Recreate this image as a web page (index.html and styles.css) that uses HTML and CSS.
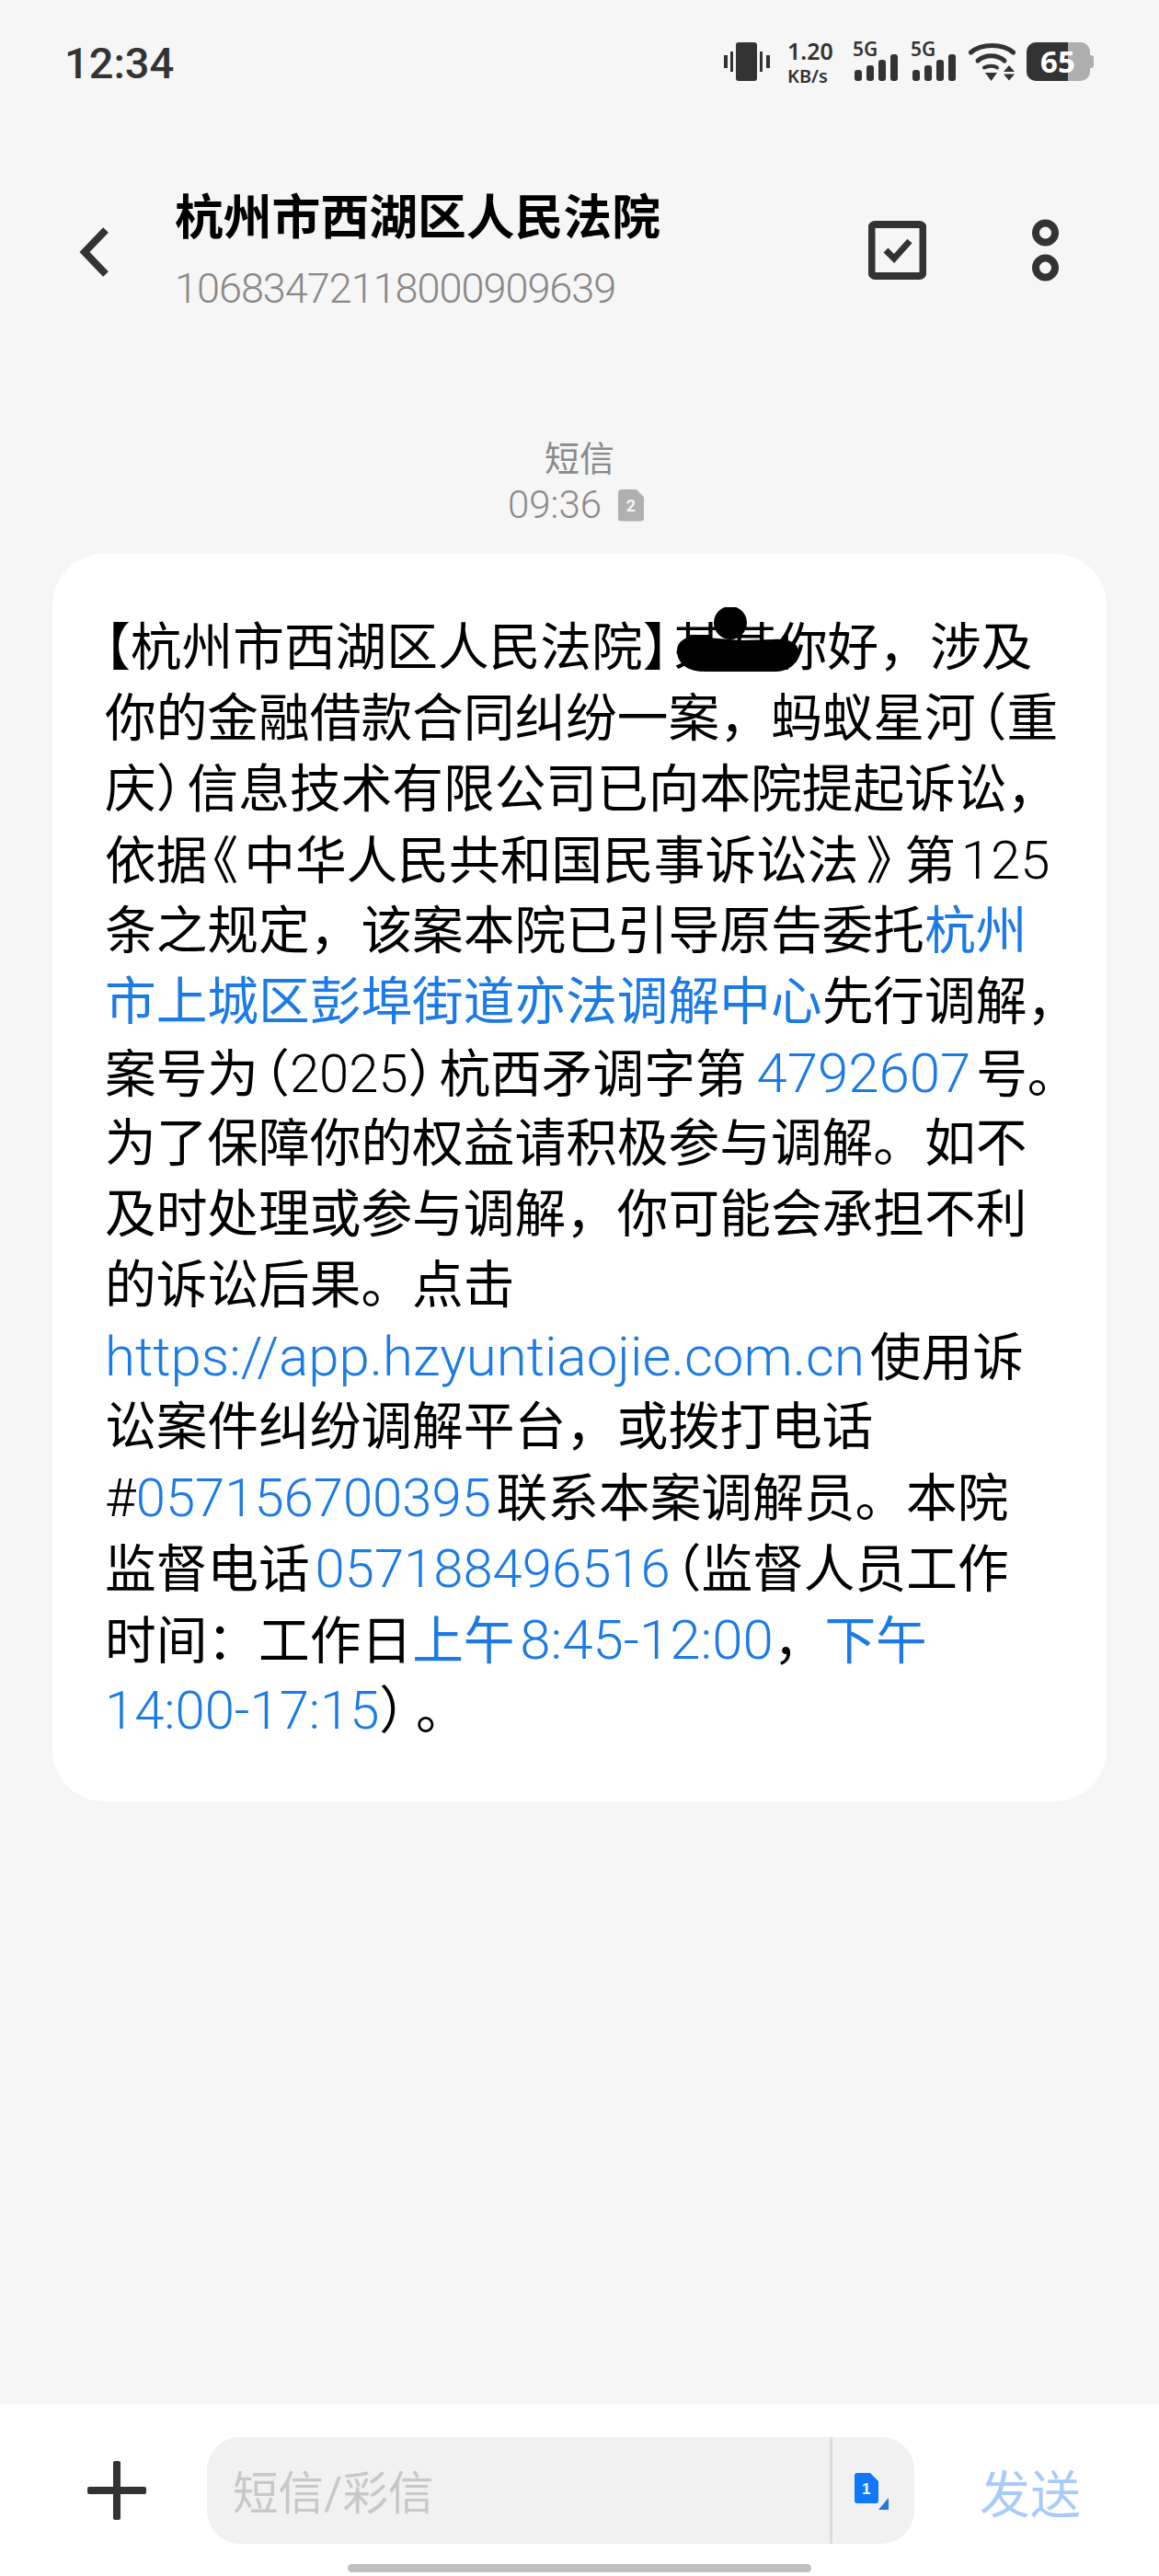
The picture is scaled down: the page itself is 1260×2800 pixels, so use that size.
FILE: index.html
```html
<!DOCTYPE html>
<html>
<head>
    <title>短信</title>
    <link rel="stylesheet" href="styles.css">
</head>
<body>
    <div class="phone">
        <div class="status-bar">
            <span class="clock">12:34</span>
            <div class="status-icons">
                <svg class="icon-vibrate" width="50" height="42" viewBox="0 0 50 42">
                    <rect x="13" y="0" width="23" height="42" rx="3" fill="#333"/>
                    <rect x="7" y="10" width="3" height="22" fill="#333"/>
                    <rect x="0" y="14" width="4" height="14" fill="#333"/>
                    <rect x="39" y="10" width="3" height="22" fill="#333"/>
                    <rect x="46" y="14" width="4" height="14" fill="#333"/>
                </svg>
                <div class="net-speed">1.20<br><span class="speed-unit">KB/s</span></div>
                <div class="signal">
                    <span class="signal-label">5G</span>
                    <svg width="47" height="29" viewBox="0 0 47 29">
                        <rect x="0" y="17" width="8" height="12" rx="3" fill="#333"/>
                        <rect x="13" y="12" width="8" height="17" rx="3" fill="#333"/>
                        <rect x="26" y="6" width="8" height="23" rx="3" fill="#333"/>
                        <rect x="39" y="0" width="8" height="29" rx="3" fill="#333"/>
                    </svg>
                </div>
                <div class="signal">
                    <span class="signal-label">5G</span>
                    <svg width="47" height="29" viewBox="0 0 47 29">
                        <rect x="0" y="17" width="8" height="12" rx="3" fill="#333"/>
                        <rect x="13" y="12" width="8" height="17" rx="3" fill="#333"/>
                        <rect x="26" y="6" width="8" height="23" rx="3" fill="#333"/>
                        <rect x="39" y="0" width="8" height="29" rx="3" fill="#333"/>
                    </svg>
                </div>
                <svg class="icon-wifi" width="51" height="42" viewBox="0 0 51 42">
                    <path d="M2.5 11 C14 1 37 1 48.5 11" fill="none" stroke="#333" stroke-width="5" stroke-linecap="round"/>
                    <path d="M10 20 C18 13 31 13 39 20" fill="none" stroke="#333" stroke-width="5" stroke-linecap="round"/>
                    <path d="M17 27.5 C21 25 28 25 31 27.5" fill="none" stroke="#333" stroke-width="4" stroke-linecap="round"/>
                    <path d="M18 33 H31 L24.5 42 Z" fill="#333"/>
                    <path d="M44 25 L50 32 H38 Z M38 34.5 H50 L44 41.5 Z" fill="#333"/>
                </svg>
                <div class="battery">
                    <div class="battery-body">65</div>
                    <span class="battery-cap"></span>
                </div>
            </div>
        </div>

        <header class="top-bar">
            <svg class="back" width="32" height="54" viewBox="0 0 32 54">
                <path d="M29 3 L6 27 L29 51" fill="none" stroke="#333" stroke-width="8"/>
            </svg>
            <div class="contact">
                <h1 class="contact-name">杭州市西湖区人民法院</h1>
                <div class="contact-number">10683472118000909639</div>
            </div>
            <svg class="icon-select" width="63" height="64" viewBox="0 0 63 64">
                <rect x="3.5" y="4" width="56" height="56" rx="4" fill="none" stroke="#333" stroke-width="8"/>
                <path d="M19 32 L28 41 L45 22" fill="none" stroke="#333" stroke-width="7"/>
            </svg>
            <svg class="icon-more" width="29" height="68" viewBox="0 0 29 68">
                <circle cx="14.5" cy="15" r="10.5" fill="none" stroke="#333" stroke-width="8"/>
                <circle cx="14.5" cy="53" r="10.5" fill="none" stroke="#333" stroke-width="8"/>
            </svg>
        </header>

        <main class="thread">
            <div class="msg-meta">
                <div class="msg-type">短信</div>
                <div class="msg-time"><span>09:36</span><span class="sim-badge">2</span></div>
            </div>
            <section class="bubble">
                <div class="line"><span class="halt">【</span>杭州市西湖区人民法院<span class="halt close">】</span>某某你好，涉及<svg class="redact" width="132" height="75" viewBox="0 0 132 75">
                    <circle cx="58" cy="17" r="18" fill="#000"/>
                    <path d="M0 47 C0 38 8 32 20 32 L70 36 L105 35 C120 34 132 38 132 48 C132 62 122 70 105 70 L30 70 C10 70 0 60 0 47 Z" fill="#000"/>
                </svg></div>
                <div class="line">你的金融借款合同纠纷一案，蚂蚁星河<span class="halt open">（</span>重</div>
                <div class="line">庆<span class="halt close">）</span>信息技术有限公司已向本院提起诉讼，</div>
                <div class="line">依据<span class="halt book-open">《</span>中华人民共和国民事诉讼法<span class="halt book-close">》</span>第 <span class="lat">125</span></div>
                <div class="line">条之规定，该案本院已引导原告委托<a>杭州</a></div>
                <div class="line"><a>市上城区彭埠街道亦法调解中心</a>先行调解，</div>
                <div class="line">案号为<span class="halt open">（</span><span class="lat">2025</span><span class="halt close">）</span>杭西矛调字第 <a class="lat wide case-no">4792607</a> 号。</div>
                <div class="line">为了保障你的权益请积极参与调解。如不</div>
                <div class="line">及时处理或参与调解，你可能会承担不利</div>
                <div class="line">的诉讼后果。点击</div>
                <div class="line"><a class="lat wide">https://app.hzyuntiaojie.com.cn</a> 使用诉</div>
                <div class="line">讼案件纠纷调解平台，或拨打电话</div>
                <div class="line"><span class="lat">#</span><a class="lat">057156700395</a> 联系本案调解员。本院</div>
                <div class="line">监督电话 <a class="lat">057188496516</a><span class="halt open">（</span>监督人员工作</div>
                <div class="line">时间：工作日<a>上午 <span class="lat wide">8:45-12:00</span></a>，<a>下午</a></div>
                <div class="line"><a class="lat">14:00-17:15</a><span class="halt close">）</span> 。</div>
            </section>
        </main>

        <footer class="composer">
            <svg class="icon-plus" width="64" height="64" viewBox="0 0 64 64">
                <rect x="0" y="28" width="64" height="8" rx="2" fill="#333"/>
                <rect x="28" y="0" width="8" height="64" rx="2" fill="#333"/>
            </svg>
            <div class="input-box">
                <span class="placeholder">短信/彩信</span>
                <div class="sim-switch">
                    <svg width="37" height="40" viewBox="0 0 37 40">
                        <path d="M3 0 H17 L26 9 V30 Q26 33 23 33 H3 Q0 33 0 30 V3 Q0 0 3 0 Z" fill="#0f78fa"/>
                        <path d="M37 27 V40 H26 Z" fill="#2a77d8"/>
                        <text x="8" y="23" class="sim-num">1</text>
                    </svg>
                </div>
            </div>
            <span class="send">发送</span>
        </footer>
        <div class="home-bar"></div>
    </div>
</body>
</html>
```

FILE: styles.css
```css
* {
    box-sizing: border-box;
}

body {
    margin: 0;
    padding: 0;
    background-color: #f6f6f6;
    font-family: Roboto, "Noto Sans CJK SC", sans-serif;
}

.phone {
    width: 1260px;
    height: 2800px;
    display: flex;
    flex-direction: column;
}

.status-bar {
    height: 204px;
    padding: 46px 71px 0 70px;
    display: flex;
    justify-content: space-between;
    align-items: flex-start;
    color: #333;
}

.clock {
    margin-top: 2px;
    font-size: 47px;
    line-height: 42px;
    font-weight: 500;
}

.status-icons {
    display: flex;
    align-items: flex-start;
}

.icon-vibrate {
    margin-right: 19px;
}

.net-speed {
    width: 50px;
    margin-top: -3px;
    margin-right: 21px;
    font-family: "Noto Sans", sans-serif;
    font-size: 25px;
    line-height: 25px;
    font-weight: 600;
}

.speed-unit {
    font-size: 20px;
}

.signal {
    width: 49px;
    height: 42px;
    margin-right: 14px;
    position: relative;
}

.signal-label {
    position: absolute;
    left: 0;
    top: -3px;
    font-family: "Noto Sans", sans-serif;
    font-size: 21px;
    font-weight: 600;
    line-height: 21px;
}

.signal svg {
    position: absolute;
    left: 2px;
    bottom: 0;
}

.icon-wifi {
    margin-right: 12px;
}

.battery {
    width: 73px;
    height: 42px;
    display: flex;
    align-items: center;
}

.battery-body {
    width: 69px;
    height: 42px;
    padding-left: 15px;
    background: linear-gradient(to right, #333 45px, #aeaeae 45px);
    border-radius: 10px;
    color: #fff;
    font-family: "Noto Sans", sans-serif;
    font-size: 33px;
    font-weight: 700;
    line-height: 42px;
}

.battery-cap {
    width: 4px;
    height: 14px;
    background-color: #aeaeae;
    border-radius: 0 3px 3px 0;
}

.top-bar {
    height: 136px;
    padding: 0 109px 0 86px;
    display: flex;
    align-items: flex-start;
}

.back {
    margin-top: 43px;
    margin-right: 72px;
}

.contact {
    flex: 1;
}

.contact-name {
    margin: 0;
    padding-top: 1px;
    font-size: 52.8px;
    line-height: 64px;
    font-weight: 700;
    color: #000;
}

.contact-number {
    margin-top: 19px;
    font-size: 45px;
    line-height: 52px;
    font-weight: 300;
    letter-spacing: -1px;
    color: #888;
}

.icon-select {
    margin-top: 36px;
}

.icon-more {
    margin-top: 34px;
    margin-left: 115px;
}

.thread {
    flex: 1;
    padding: 0 57px;
}

.msg-meta {
    margin-top: 136px;
    color: #8a8a8a;
    text-align: center;
}

.msg-type {
    font-size: 38px;
    line-height: 46px;
}

.msg-time {
    display: flex;
    justify-content: center;
    align-items: center;
    gap: 18px;
    padding-right: 8px;
    font-size: 42px;
    line-height: 54px;
    font-weight: 300;
}

.sim-badge {
    width: 28px;
    height: 35px;
    background-color: #b0b0b0;
    border-radius: 4px;
    clip-path: polygon(0 0, 68% 0, 100% 25%, 100% 100%, 0 100%);
    color: #f6f6f6;
    font-size: 18px;
    line-height: 35px;
    font-weight: 700;
    text-align: center;
}

.bubble {
    margin-top: 26px;
    height: 1356px;
    padding: 64px 57px 0 57px;
    background-color: #fff;
    border-radius: 56px;
}

.line {
    font-size: 55.7px;
    line-height: 77px;
    height: 77px;
    color: #000;
    white-space: nowrap;
    word-spacing: -8px;
    position: relative;
}

.line a {
    color: #1b7ae6;
}

.lat {
    font-size: 58px;
    font-weight: 300;
}

.wide {
    font-size: 60px;
}

.case-no {
    margin-left: 5px;
}

.halt {
    font-feature-settings: "halt";
}

.open {
    margin-left: 6px;
}

.close {
    margin-right: 6px;
}

.book-open {
    margin: 0 6px;
}

.book-close {
    margin: 0 14px 0 8px;
}

.redact {
    position: absolute;
    left: 622px;
    top: -6px;
}

.composer {
    height: 187px;
    background-color: #fff;
    padding-left: 95px;
    display: flex;
    align-items: center;
}

.icon-plus {
    margin-right: 66px;
}

.input-box {
    width: 769px;
    height: 116px;
    background-color: #f1f1f1;
    border-radius: 36px;
    display: flex;
    align-items: center;
    justify-content: space-between;
    padding-left: 28px;
}

.placeholder {
    font-size: 49.5px;
    color: #c8c8c8;
}

.sim-switch {
    width: 92px;
    height: 116px;
    border-left: 3px solid #dcdcdc;
    padding: 39px 0 0 24px;
}

.sim-num {
    fill: #fff;
    font-family: "Liberation Sans", sans-serif;
    font-size: 17px;
    font-weight: 700;
}

.send {
    margin-left: 71px;
    font-size: 55px;
    color: #a8cbfb;
}

.home-bar {
    position: absolute;
    left: 378px;
    top: 2787px;
    width: 504px;
    height: 9px;
    border-radius: 5px;
    background-color: #c0c0c0;
}
```
